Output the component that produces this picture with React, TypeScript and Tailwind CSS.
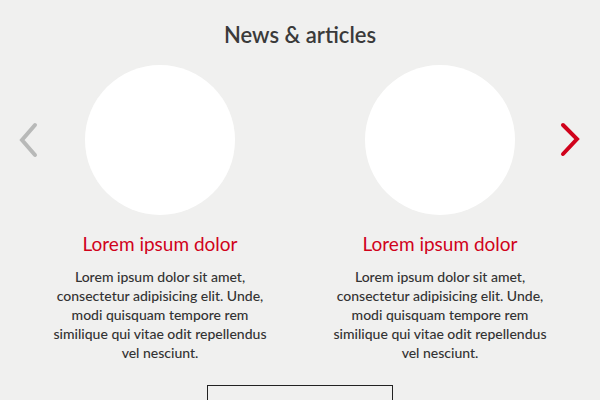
import React from "react";

const Card = () => (
  <div className="flex flex-col items-center w-[280px]">
    <div className="w-[150px] h-[150px] rounded-full bg-white" />
    <h3 className="mt-[18px] text-[19px] leading-[22px] text-[#d0021b]">Lorem ipsum dolor</h3>
    <p className="mt-[12px] text-[14px] leading-[19px] text-[#333333] font-medium text-center">
      Lorem ipsum dolor sit amet,
      <br />
      consectetur adipisicing elit. Unde,
      <br />
      modi quisquam tempore rem
      <br />
      similique qui vitae odit repellendus
      <br />
      vel nesciunt.
    </p>
  </div>
);

export default function App() {
  return (
    <div
      className="relative w-[600px] h-[400px] overflow-hidden bg-[#f0f0ef]"
      style={{ fontFamily: "Lato, 'Open Sans', sans-serif" }}
    >
      <h2 className="pt-[22px] text-center text-[22px] leading-[26px] text-[#3a3a3a] font-semibold">
        News &amp; articles
      </h2>
      <div className="mt-[17px] flex justify-center">
        <Card />
        <Card />
      </div>
      <div className="mt-[23px] flex justify-center">
        <div className="w-[186px] h-[40px] border border-[#222222]" />
      </div>
      <svg className="absolute left-[16px] top-[118px]" width="30" height="44" viewBox="0 0 30 44">
        <polyline points="19,7 6,22 19,37" fill="none" stroke="#b8b9b8" strokeWidth="4" strokeLinecap="round" strokeLinejoin="miter" />
      </svg>
      <svg className="absolute left-[556px] top-[118px]" width="30" height="44" viewBox="0 0 30 44">
        <polyline points="7,7 21,21 7,36" fill="none" stroke="#d0021b" strokeWidth="4" strokeLinecap="round" strokeLinejoin="miter" />
      </svg>
    </div>
  );
}
